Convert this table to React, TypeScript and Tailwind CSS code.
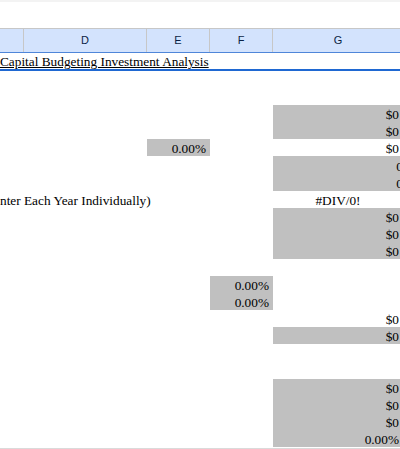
type Row = {
  label?: string;
  e?: string;
  eFill?: boolean;
  f?: string;
  fFill?: boolean;
  g?: string;
  gFill?: boolean;
  gAlign?: "right" | "center" | "clip";
};

const COLS = "grid grid-cols-[24px_123px_63px_63px_130px]";

const ROWS: Row[] = [
  {},
  {},
  { g: "$0", gFill: true },
  { g: "$0", gFill: true },
  { e: "0.00%", eFill: true, g: "$0" },
  { g: "0", gFill: true, gAlign: "clip" },
  { g: "0", gFill: true, gAlign: "clip" },
  { label: "nter Each Year Individually)", g: "#DIV/0!", gAlign: "center" },
  { g: "$0", gFill: true },
  { g: "$0", gFill: true },
  { g: "$0", gFill: true },
  {},
  { f: "0.00%", fFill: true },
  { f: "0.00%", fFill: true },
  { g: "$0" },
  { g: "$0", gFill: true },
  {},
  {},
  { g: "$0", gFill: true },
  { g: "$0", gFill: true },
  { g: "$0", gFill: true },
  { g: "0.00%", gFill: true },
];

function Cell({ text, fill, align = "right" }: { text?: string; fill?: boolean; align?: string }) {
  const base = `flex items-end leading-[14px] overflow-visible whitespace-nowrap ${fill ? "bg-[#c0c0c0]" : ""}`;
  if (align === "center") return <div className={`${base} justify-center`}>{text}</div>;
  if (align === "clip") return <div className={`${base} justify-end pr-0`}>{text}</div>;
  return <div className={`${base} justify-end pr-[4px]`}>{text}</div>;
}

function SheetRow({ row }: { row: Row }) {
  return (
    <div className={`${COLS} h-[17.1px]`}>
      {row.label ? (
        <div className="col-span-2 flex items-end leading-[14px] whitespace-nowrap">{row.label}</div>
      ) : (
        <>
          <div />
          <div />
        </>
      )}
      <Cell text={row.e} fill={row.eFill} />
      <Cell text={row.f} fill={row.fFill} />
      <Cell text={row.g} fill={row.gFill} align={row.gAlign} />
    </div>
  );
}

export default function App() {
  return (
    <div className="w-[400px] h-[449px] overflow-hidden bg-white flex flex-col text-black text-[13.3px] font-['Liberation_Serif',serif]">
      <div className="h-[2px] bg-[#f3f3f3]" />
      <div className="h-[26px]" />
      {/* column headers */}
      <div className={`${COLS} h-[24px] border-t border-[#c7c7c7] bg-[#d3e3fd] font-['Liberation_Sans',Arial,sans-serif] text-[11px] text-[#0b1f44]`}>
        {["", "D", "E", "F", "G"].map((c, i) => (
          <div
            key={i}
            className={`flex items-center justify-center ${i < 4 ? "border-r border-[#c7c7c7]" : ""}`}
          >
            {c}
          </div>
        ))}
      </div>
      <div className="h-[1px] bg-[#4f86d9]" />
      {/* title row */}
      <div className="h-[16px] flex items-end leading-[14px]">
        <span className="underline whitespace-nowrap">Capital Budgeting Investment Analysis</span>
      </div>
      <div className="h-[2px] bg-[#1f68d2]" />
      <div className="flex flex-col">
        {ROWS.map((r, i) => (
          <SheetRow key={i} row={r} />
        ))}
      </div>
      <div className="flex-1 border-t border-[#dadada] bg-[#f1f1f1] mt-[1px]" />
    </div>
  );
}
